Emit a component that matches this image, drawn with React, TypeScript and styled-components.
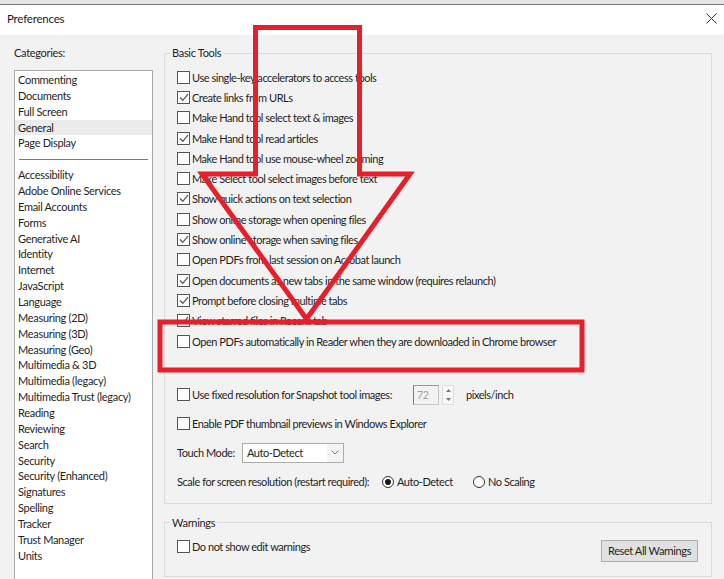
import React from "react";
import styled, { createGlobalStyle } from "styled-components";

const GlobalStyle = createGlobalStyle`
  html, body { margin: 0; padding: 0; }
  body {
    background: #f2f2f2;
    font-family: Lato, "Liberation Sans", sans-serif;
    font-size: 11px;
    color: #1f1f1f;
    overflow: hidden;
  }
  * { box-sizing: border-box; }
`;

const Window = styled.div`
  position: relative;
  width: 724px;
  height: 579px;
  overflow: hidden;
  display: flex;
  flex-direction: column;
  background: #f2f2f2;
`;

const BackStrip = styled.div`
  height: 5px;
  flex-shrink: 0;
  background: #e6e6e6;
  border-bottom: 1px solid #777;
`;

const TitleBar = styled.div`
  height: 30px;
  flex-shrink: 0;
  background: #fff;
  display: flex;
  align-items: center;
  justify-content: space-between;
  padding: 0 7px 4px 7px;
`;

const Title = styled.span`
  font-size: 11.5px;
  letter-spacing: -0.2px;
  color: #1a1a1a;
`;

const Body = styled.div`
  flex: 1;
  display: flex;
  min-height: 0;
`;

const Sidebar = styled.div`
  width: 164px;
  flex-shrink: 0;
  padding: 12px 0 0 14px;
  display: flex;
  flex-direction: column;
`;

const SmallLabel = styled.div`
  line-height: 12px;
  letter-spacing: -0.3px;
`;

const CategoryList = styled.div`
  margin-top: 11px;
  width: 139px;
  height: 520px;
  flex-shrink: 0;
  background: #fff;
  border: 1px solid #a9a9a9;
  padding-top: 1px;
`;

const Category = styled.div<{ $selected?: boolean }>`
  height: 15.87px;
  line-height: 15.87px;
  padding-left: 3px;
  letter-spacing: -0.3px;
  white-space: nowrap;
  background: ${(p) => (p.$selected ? "#ebebeb" : "transparent")};
`;

const Separator = styled.div`
  height: 15.87px;
  display: flex;
  align-items: center;
  padding: 0 4px;
  &::after {
    content: "";
    flex: 1;
    height: 1px;
    background: #3d8fb8;
  }
`;

const Main = styled.div`
  flex: 1;
  padding-right: 12px;
  display: flex;
  flex-direction: column;
`;

const Group = styled.fieldset<{ $top: number }>`
  margin: ${(p) => p.$top}px 0 0 0;
  padding: 0 13px 0 5px;
  border: 1px solid #dadada;
  min-width: 0;
`;

const Legend = styled.legend`
  padding: 0 2px;
  line-height: 12px;
  letter-spacing: -0.3px;
`;

const GroupContent = styled.div<{ $pt: number; $pb: number }>`
  padding: ${(p) => p.$pt}px 0 ${(p) => p.$pb}px 7px;
  display: flex;
  flex-direction: column;
`;

const Row = styled.div<{ $h: number; $mt?: number }>`
  height: ${(p) => p.$h}px;
  margin-top: ${(p) => p.$mt ?? 0}px;
  display: flex;
  align-items: center;
  white-space: nowrap;
  letter-spacing: -0.45px;
`;

const CheckLabel = styled.label<{ $w?: number }>`
  display: flex;
  align-items: center;
  gap: 2px;
  width: ${(p) => (p.$w ? `${p.$w}px` : "auto")};
  flex-shrink: 0;
`;

const Box = styled.span`
  width: 13px;
  height: 13px;
  flex-shrink: 0;
  border: 1px solid #555;
  background: #fdfdfd;
  display: grid;
  place-items: center;
`;

const FieldLabel = styled.span<{ $w: number }>`
  width: ${(p) => p.$w}px;
  flex-shrink: 0;
`;

const SpinInput = styled.div`
  width: 26px;
  height: 20px;
  border: 1px solid #c4c4c4;
  border-left-color: #7c7c7c;
  border-top-color: #9a9a9a;
  color: #a0a0a0;
  padding-left: 3px;
  line-height: 18px;
  font-size: 10.5px;
`;

const SpinButtons = styled.div`
  width: 12px;
  height: 20px;
  margin-left: 3px;
  display: flex;
  flex-direction: column;
  border: 1px solid #dedede;
  background: #f8f8f8;
`;

const SpinHalf = styled.div`
  flex: 1;
  display: grid;
  place-items: center;
`;

const Unit = styled.span`
  margin-left: 12px;
`;

const Select = styled.div`
  width: 102px;
  height: 20px;
  border: 1px solid #adadad;
  background: #fff;
  display: flex;
  align-items: center;
`;

const SelectText = styled.span`
  flex: 1;
  padding-left: 4px;
`;

const SelectArrow = styled.span`
  width: 16px;
  height: 100%;
  display: grid;
  place-items: center;
  background: #f4f4f4;
`;

const RadioOption = styled.label<{ $w?: number }>`
  display: flex;
  align-items: center;
  gap: 3px;
  width: ${(p) => (p.$w ? `${p.$w}px` : "auto")};
`;

const RadioCircle = styled.span<{ $on?: boolean }>`
  width: 12px;
  height: 12px;
  border-radius: 50%;
  border: 1px solid #333;
  background: #fff;
  display: grid;
  place-items: center;
  &::after {
    content: "";
    width: 6px;
    height: 6px;
    border-radius: 50%;
    background: ${(p) => (p.$on ? "#1a1a1a" : "transparent")};
  }
`;

const WarnRow = styled.div`
  display: flex;
  justify-content: space-between;
  align-items: flex-start;
`;

const Button = styled.button`
  margin-top: 3px;
  width: 97px;
  height: 22px;
  padding: 0;
  background: #e1e1e1;
  border: 1px solid #adadad;
  font-family: inherit;
  font-size: 11px;
  letter-spacing: -0.4px;
  color: #1f1f1f;
`;

const Overlay = styled.svg`
  position: absolute;
  left: 0;
  top: 0;
  pointer-events: none;
`;

const Check = () => (
  <svg width="10" height="9" viewBox="0 0 10 9">
    <polyline points="1,4.5 3.8,7.3 9,1.2" fill="none" stroke="#5a5a5a" strokeWidth="1.3" />
  </svg>
);

const CheckBox = ({ checked }: { checked?: boolean }) => <Box>{checked && <Check />}</Box>;

const categoriesTop = ["Commenting", "Documents", "Full Screen", "General", "Page Display"];
const categoriesBottom = [
  "Accessibility",
  "Adobe Online Services",
  "Email Accounts",
  "Forms",
  "Generative AI",
  "Identity",
  "Internet",
  "JavaScript",
  "Language",
  "Measuring (2D)",
  "Measuring (3D)",
  "Measuring (Geo)",
  "Multimedia & 3D",
  "Multimedia (legacy)",
  "Multimedia Trust (legacy)",
  "Reading",
  "Reviewing",
  "Search",
  "Security",
  "Security (Enhanced)",
  "Signatures",
  "Spelling",
  "Tracker",
  "Trust Manager",
  "Units",
];

const options: [string, boolean][] = [
  ["Use single-key accelerators to access tools", false],
  ["Create links from URLs", true],
  ["Make Hand tool select text & images", false],
  ["Make Hand tool read articles", true],
  ["Make Hand tool use mouse-wheel zooming", false],
  ["Make Select tool select images before text", false],
  ["Show quick actions on text selection", true],
  ["Show online storage when opening files", false],
  ["Show online storage when saving files", true],
  ["Open PDFs from last session on Acrobat launch", false],
  ["Open documents as new tabs in the same window (requires relaunch)", true],
  ["Prompt before closing multiple tabs", true],
  ["View starred files in Recent tab", true],
  ["Open PDFs automatically in Reader when they are downloaded in Chrome browser", false],
];

export default function App() {
  return (
    <>
      <GlobalStyle />
      <Window>
        <BackStrip />
        <TitleBar>
          <Title>Preferences</Title>
          <svg width="11" height="11" viewBox="0 0 11 11">
            <path d="M0.5 0.5 L10.5 10.5 M10.5 0.5 L0.5 10.5" stroke="#333" strokeWidth="1" />
          </svg>
        </TitleBar>
        <Body>
          <Sidebar>
            <SmallLabel>Categories:</SmallLabel>
            <CategoryList>
              {categoriesTop.map((c) => (
                <Category key={c} $selected={c === "General"}>
                  {c}
                </Category>
              ))}
              <Separator />
              {categoriesBottom.map((c) => (
                <Category key={c}>{c}</Category>
              ))}
            </CategoryList>
          </Sidebar>
          <Main>
            <Group $top={12}>
              <Legend>Basic Tools</Legend>
              <GroupContent $pt={8} $pb={6.5}>
                {options.map(([text, on]) => (
                  <Row key={text} $h={20.3}>
                    <CheckLabel>
                      <CheckBox checked={on} />
                      {text}
                    </CheckLabel>
                  </Row>
                ))}
                <Row $h={29} $mt={29.3}>
                  <CheckLabel $w={236}>
                    <CheckBox />
                    Use fixed resolution for Snapshot tool images:
                  </CheckLabel>
                  <SpinInput>72</SpinInput>
                  <SpinButtons>
                    <SpinHalf>
                      <svg width="5" height="3" viewBox="0 0 5 3">
                        <polygon points="2.5,0 5,3 0,3" fill="#777" />
                      </svg>
                    </SpinHalf>
                    <SpinHalf>
                      <svg width="5" height="3" viewBox="0 0 5 3">
                        <polygon points="0,0 5,0 2.5,3" fill="#777" />
                      </svg>
                    </SpinHalf>
                  </SpinButtons>
                  <Unit>pixels/inch</Unit>
                </Row>
                <Row $h={29}>
                  <CheckLabel>
                    <CheckBox />
                    Enable PDF thumbnail previews in Windows Explorer
                  </CheckLabel>
                </Row>
                <Row $h={29}>
                  <FieldLabel $w={65}>Touch Mode:</FieldLabel>
                  <Select>
                    <SelectText>Auto-Detect</SelectText>
                    <SelectArrow>
                      <svg width="8" height="5" viewBox="0 0 8 5">
                        <polyline points="0.5,0.5 4,4 7.5,0.5" fill="none" stroke="#777" strokeWidth="1" />
                      </svg>
                    </SelectArrow>
                  </Select>
                </Row>
                <Row $h={29}>
                  <FieldLabel $w={205}>Scale for screen resolution (restart required):</FieldLabel>
                  <RadioOption $w={91}>
                    <RadioCircle $on />
                    Auto-Detect
                  </RadioOption>
                  <RadioOption>
                    <RadioCircle />
                    No Scaling
                  </RadioOption>
                </Row>
              </GroupContent>
            </Group>
            <Group $top={13}>
              <Legend>Warnings</Legend>
              <GroupContent $pt={8} $pb={14}>
                <WarnRow>
                  <Row $h={20}>
                    <CheckLabel>
                      <CheckBox />
                      Do not show edit warnings
                    </CheckLabel>
                  </Row>
                  <Button>Reset All Warnings</Button>
                </WarnRow>
              </GroupContent>
            </Group>
          </Main>
        </Body>
        <Overlay width="724" height="579" viewBox="0 0 724 579">
          <path
            d="M255.5 27.5 L359.5 27.5 L359.5 174 L410 174 L306.5 319 L202 174 L255.5 174 Z"
            fill="none"
            stroke="#e61f2b"
            strokeWidth="5"
            strokeLinejoin="miter"
          />
          <rect x="160" y="322" width="422" height="48" fill="none" stroke="#e61f2b" strokeWidth="5" />
        </Overlay>
      </Window>
    </>
  );
}
